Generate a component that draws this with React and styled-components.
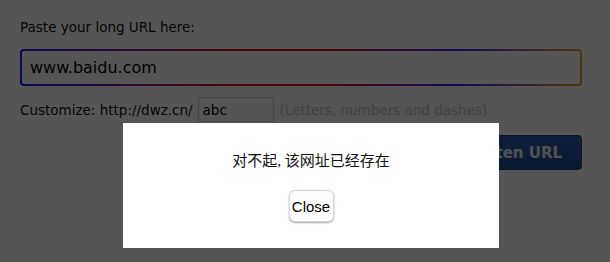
import React from "react";
import styled, { createGlobalStyle } from "styled-components";

const GlobalStyle = createGlobalStyle`
	html, body {
		margin: 0;
		padding: 0;
		background: #ffffff;
	}
	body {
		font-family: "DejaVu Sans", Verdana, sans-serif;
	}
`;

const Page = styled.div`
	width: 610px;
	height: 262px;
	box-sizing: border-box;
	padding: 18px 28px 0 20px;
	display: flex;
	flex-direction: column;
	color: #111111;
`;

const Label = styled.div`
	font-size: 13.5px;
	line-height: 18px;
`;

const UrlInput = styled.input`
	margin-top: 13px;
	height: 37px;
	box-sizing: border-box;
	padding: 0 8px;
	font-family: "DejaVu Sans", Verdana, sans-serif;
	font-size: 16px;
	color: #000000;
	border: 2px solid transparent;
	border-radius: 4px;
	outline: none;
	background:
		linear-gradient(#ffffff, #ffffff) padding-box,
		linear-gradient(90deg, #1a1aff 0%, #e01020 38%, #e01020 55%, #3a1aff 78%, #f0a020 100%) border-box;
`;

const CustomRow = styled.div`
	margin-top: 11px;
	display: flex;
	align-items: center;
	gap: 5px;
	font-size: 13.5px;
`;

const SlugInput = styled.input`
	width: 76px;
	height: 25px;
	box-sizing: border-box;
	padding: 0 4px;
	border: 1px solid #cccccc;
	font-family: "DejaVu Sans", Verdana, sans-serif;
	font-size: 13.5px;
	color: #000000;
	outline: none;
`;

const Hint = styled.span`
	color: #c4c4c4;
	margin-left: 1px;
`;

const Actions = styled.div`
	margin-top: 13px;
	display: flex;
	justify-content: flex-end;
`;

const ShortenButton = styled.button`
	height: 35px;
	padding: 0 19px;
	border: 1px solid #183f84;
	border-radius: 4px;
	background: linear-gradient(#2c5cb0, #1f4a96);
	color: #f4f4f4;
	font-family: "DejaVu Sans", Verdana, sans-serif;
	font-weight: bold;
	font-size: 15px;
`;

const Overlay = styled.div`
	position: fixed;
	inset: 0;
	background: rgba(0, 0, 0, 0.667);
`;

const Modal = styled.div`
	position: absolute;
	left: 123px;
	top: 123px;
	width: 376px;
	height: 125px;
	background: #ffffff;
	display: flex;
	flex-direction: column;
	align-items: center;
	padding-top: 29px;
	box-sizing: border-box;
	gap: 20px;
`;

const Message = styled.div`
	font-family: "Liberation Serif", "Noto Sans CJK SC", serif;
	font-size: 15px;
	line-height: 18px;
	color: #111111;
`;

const CloseButton = styled.button`
	width: 45px;
	height: 32px;
	padding: 0;
	background: #ffffff;
	border: 1px solid #d4d4d4;
	border-radius: 6px;
	box-shadow: 0 1px 2px rgba(0, 0, 0, 0.35);
	font-family: "Liberation Sans", Arial, sans-serif;
	font-size: 15px;
	color: #000000;
`;

export default function App() {
	return (
		<>
			<GlobalStyle />
			<Page>
				<Label>Paste your long URL here:</Label>
				<UrlInput defaultValue="www.baidu.com" />
				<CustomRow>
					<span>Customize: http://dwz.cn/</span>
					<SlugInput defaultValue="abc" />
					<Hint>(Letters, numbers and dashes)</Hint>
				</CustomRow>
				<Actions>
					<ShortenButton>Shorten URL</ShortenButton>
				</Actions>
			</Page>
			<Overlay>
				<Modal>
					<Message>对不起, 该网址已经存在</Message>
					<CloseButton>Close</CloseButton>
				</Modal>
			</Overlay>
		</>
	);
}
